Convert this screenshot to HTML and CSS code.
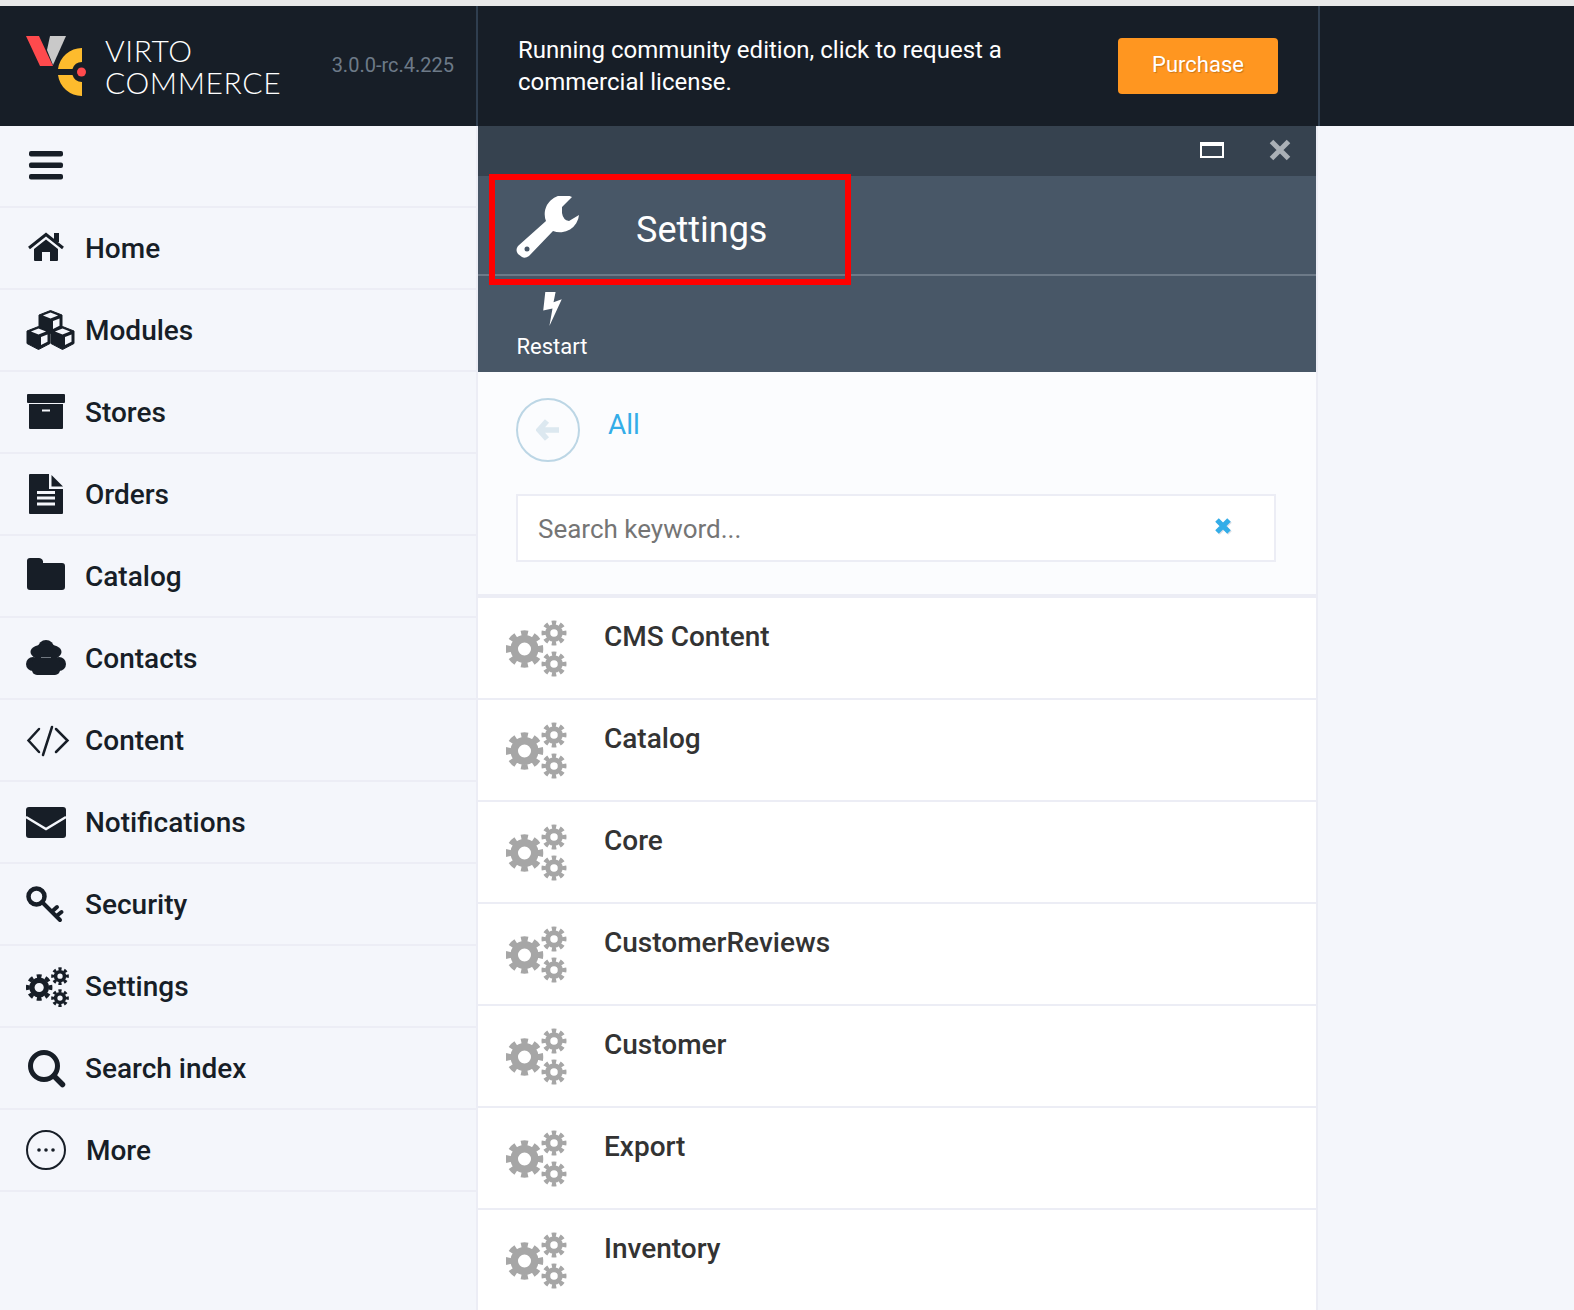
FILE: index.html
```html
<!DOCTYPE html>
<html lang="en">
<head>
    <meta charset="UTF-8">
    <meta name="viewport" content="width=device-width, initial-scale=1.0">
    <title>Virto Commerce - Settings</title>
    <link rel="stylesheet" href="styles.css">
</head>
<body>
    <!-- shared icons -->
    <svg class="defs" width="0" height="0">
        <symbol id="cogs" viewBox="0 0 62 58">
            <circle class="ring" cx="18.5" cy="29" r="10.25" stroke-width="7.5"/>
            <circle class="ring" cx="18.5" cy="29" r="16" stroke-width="5.5" pathLength="16" stroke-dasharray="1.1 0.9" stroke-dashoffset="0.55"/>
            <circle class="ring" cx="48" cy="13" r="6.25" stroke-width="5"/>
            <circle class="ring" cx="48" cy="13" r="10.25" stroke-width="4.5" pathLength="16" stroke-dasharray="1.1 0.9" stroke-dashoffset="0.55"/>
            <circle class="ring" cx="48" cy="44" r="6.25" stroke-width="5"/>
            <circle class="ring" cx="48" cy="44" r="10.25" stroke-width="4.5" pathLength="16" stroke-dasharray="1.1 0.9" stroke-dashoffset="0.55"/>
        </symbol>
        <symbol id="cube" viewBox="0 0 24 24" overflow="visible">
            <path d="M12 .5L23.5 5V17.5L12 23.5L.5 17.5V5Z" fill="#171e27" stroke="#171e27" stroke-linejoin="round"/>
            <path d="M12 2.6L19.6 5.6L12 8.6L4.4 5.6Z" fill="#f4f6fb"/>
            <path d="M14.5 11L21 8.4V15.8L14.5 19Z" fill="#f4f6fb"/>
        </symbol>
    </svg>

    <header class="topbar">
        <div class="brand">
            <svg class="logo" viewBox="0 0 60 60">
                <path d="M0 0H13L27 30H14Z" fill="#ff4a4d"/>
                <path d="M24 0H40L27 29L21 14Z" fill="#c9c9c9"/>
                <path d="M56 12A24 24 0 0 0 32 33H46.500A10 10 0 0 1 56 26Z" fill="#fdbb2d"/>
                <path d="M32 39H46.500A10 10 0 0 0 56 46V60A24 24 0 0 1 32 39Z" fill="#fdbb2d"/>
                <circle cx="55.500" cy="36" r="4.500" fill="#ff4a4d"/>
            </svg>
            <div class="brand-name">VIRTO<br>COMMERCE</div>
            <div class="version">3.0.0-rc.4.225</div>
        </div>
        <div class="notice">
            <p>Running community edition, click to request a commercial license.</p>
            <button class="purchase" type="button">Purchase</button>
        </div>
    </header>

    <div class="main">
        <nav class="sidebar">
            <div class="nav-row">
                <svg class="nav-icon" viewBox="0 0 44 44">
                    <rect x="3" y="7" width="34" height="5.500" rx="2"/>
                    <rect x="3" y="18.500" width="34" height="5.500" rx="2"/>
                    <rect x="3" y="30" width="34" height="5.500" rx="2"/>
                </svg>
            </div>
            <a class="nav-row">
                <svg class="nav-icon" viewBox="0 0 44 44">
                    <path d="M3 22L20 8.500L37 22" fill="none" stroke="#171e27" stroke-width="3"/>
                    <rect x="28" y="7" width="5" height="9"/>
                    <path d="M8 23L20 13.500L32 23V34a1 1 0 0 1-1 1H24V26H16V35H9a1 1 0 0 1-1-1Z"/>
                </svg>
                Home
            </a>
            <a class="nav-row">
                <svg class="nav-icon" viewBox="0 0 44 44">
                    <use href="#cube" x="12.500" y="2" width="24" height="24"/>
                    <use href="#cube" x="0.500" y="18" width="24" height="24"/>
                    <use href="#cube" x="24.500" y="18" width="24" height="24"/>
                </svg>
                Modules
            </a>
            <a class="nav-row">
                <svg class="nav-icon" viewBox="0 0 44 44">
                    <rect x="1" y="4" width="38" height="9" rx="1"/>
                    <path d="M3 14H37V38a1 1 0 0 1-1 1H4a1 1 0 0 1-1-1ZM16 19.500V21.500H24V19.500Z" fill-rule="evenodd"/>
                </svg>
                Stores
            </a>
            <a class="nav-row">
                <svg class="nav-icon" viewBox="0 0 44 44">
                    <path d="M3 3a1 1 0 0 1 1-1H23V17H37V41a1 1 0 0 1-1 1H4a1 1 0 0 1-1-1Z"/>
                    <path d="M25.500 3L37 14.500H25.500Z"/>
                    <path d="M11 19H29V22H11ZM11 24.500H29V27.500H11ZM11 30.500H29V33.500H11Z" fill="#f4f6fb"/>
                </svg>
                Orders
            </a>
            <a class="nav-row">
                <svg class="nav-icon" viewBox="0 0 44 44">
                    <path d="M4 4H13a4 4 0 0 1 4 5H36a3 3 0 0 1 3 3V33a3 3 0 0 1-3 3H4a3 3 0 0 1-3-3V7a3 3 0 0 1 3-3Z"/>
                </svg>
                Catalog
            </a>
            <a class="nav-row">
                <svg class="nav-icon" viewBox="0 0 44 44">
                    <circle cx="20" cy="12" r="8"/>
                    <ellipse cx="20" cy="16" rx="15.500" ry="8"/>
                    <circle cx="7" cy="28" r="7"/>
                    <circle cx="33" cy="28" r="7"/>
                    <rect x="6" y="21" width="28" height="18" rx="5"/>
                    <rect x="15" y="21" width="10" height="0.800" fill="#8a9099"/>
                </svg>
                Contacts
            </a>
            <a class="nav-row">
                <svg class="nav-icon" viewBox="0 0 44 44">
                    <path d="M13 11L2.500 22.500L13 34M26 9L17 37M30 11L41.500 22.500L30 34" fill="none" stroke="#171e27" stroke-width="2.500" stroke-linecap="round"/>
                </svg>
                Content
            </a>
            <a class="nav-row">
                <svg class="nav-icon" viewBox="0 0 44 44">
                    <rect y="7" width="40" height="31" rx="3"/>
                    <path d="M0 17L20 29L40 17" fill="none" stroke="#f4f6fb" stroke-width="2.500"/>
                </svg>
                Notifications
            </a>
            <a class="nav-row">
                <svg class="nav-icon" viewBox="0 0 44 44">
                    <g fill="none" stroke="#171e27">
                        <circle cx="10.500" cy="14.500" r="8" stroke-width="4.500"/>
                        <path d="M16 20L34 38M26 29.500L31 25M30.500 34L35.500 30" stroke-width="4" stroke-linecap="round"/>
                    </g>
                </svg>
                Security
            </a>
            <a class="nav-row">
                <svg class="nav-icon" viewBox="0 0 44 44">
                    <use href="#cogs" x="0" y="3" width="44" height="41"/>
                </svg>
                Settings
            </a>
            <a class="nav-row">
                <svg class="nav-icon" viewBox="0 0 44 44">
                    <g fill="none" stroke="#171e27">
                        <circle cx="18" cy="20" r="13.500" stroke-width="5"/>
                        <path d="M28 30L36.500 38.500" stroke-width="5.500" stroke-linecap="round"/>
                    </g>
                </svg>
                Search index
            </a>
            <a class="nav-row nav-more">
                <svg class="nav-icon" viewBox="0 0 44 44">
                    <circle cx="20" cy="22" r="19" fill="none" stroke="#171e27" stroke-width="2"/>
                    <circle cx="13" cy="22" r="1.800"/>
                    <circle cx="20" cy="22" r="1.800"/>
                    <circle cx="27" cy="22" r="1.800"/>
                </svg>
                More
            </a>
        </nav>

        <section class="blade">
            <div class="blade-bar">
                <span class="maximize"></span>
                <svg class="close" width="22" height="22" viewBox="0 0 22 22">
                    <path d="M2.500 2.500L19.500 19.500M19.500 2.500L2.500 19.500" stroke="#aab0b6" stroke-width="5"/>
                </svg>
            </div>

            <div class="blade-head">
                <svg class="wrench" width="64" height="64" viewBox="0 0 64 64">
                    <path d="M56 1A19 19 0 0 0 30 25L2 50Q-1 54 2 58L6 61Q9 63 13 60L37 35A19 19 0 0 0 63 19L53 25Q47 24 46 17V11Z" fill="#fff"/>
                    <circle cx="11" cy="53" r="2.500" fill="#485767"/>
                </svg>
                <h1>Settings</h1>
                <div class="highlight"></div>
            </div>

            <div class="blade-tools">
                <div class="tool">
                    <svg width="19" height="34" viewBox="0 0 18 33">
                        <path d="M2 0H12L10 10L18 7L6 33L9 16L0 18Z" fill="#fff"/>
                    </svg>
                    <span>Restart</span>
                </div>
            </div>

            <div class="blade-filter">
                <div class="crumbs">
                    <div class="back">
                        <svg width="24" height="24" viewBox="0 0 24 24" fill="none">
                            <path d="M11 3L3 12L11 21M4 12H23" stroke="#dce8f0" stroke-width="5.500"/>
                        </svg>
                    </div>
                    <a class="crumb">All</a>
                </div>
                <div class="search">
                    <input type="text" placeholder="Search keyword...">
                    <svg class="clear" width="18" height="18" viewBox="0 0 18 18">
                        <path d="M3 3L15 15M15 3L3 15" stroke="#33ade8" stroke-width="5"/>
                    </svg>
                </div>
            </div>

            <ul class="groups">
                <li><svg width="62" height="58"><use href="#cogs"/></svg>CMS Content</li>
                <li><svg width="62" height="58"><use href="#cogs"/></svg>Catalog</li>
                <li><svg width="62" height="58"><use href="#cogs"/></svg>Core</li>
                <li><svg width="62" height="58"><use href="#cogs"/></svg>CustomerReviews</li>
                <li><svg width="62" height="58"><use href="#cogs"/></svg>Customer</li>
                <li><svg width="62" height="58"><use href="#cogs"/></svg>Export</li>
                <li><svg width="62" height="58"><use href="#cogs"/></svg>Inventory</li>
            </ul>
        </section>
    </div>
</body>
</html>
```

FILE: styles.css
```css
html, body {
    height: 100%;
}

body {
    margin: 0;
    overflow: hidden;
    background-color: #f4f6fb;
    border-top: 6px solid #e8e8e8;
    box-sizing: border-box;
    font-family: Roboto, "Liberation Sans", sans-serif;
    color: #171e27;
}

.defs {
    position: absolute;
}

.ring {
    fill: none;
    stroke: currentColor;
}

/* header */
.topbar {
    display: flex;
    height: 120px;
    background-color: #171e27;
}

.brand {
    display: flex;
    align-items: center;
    box-sizing: border-box;
    width: 478px;
    padding: 0 22px 0 26px;
    border-right: 2px solid #2f3e4f;
}

.logo {
    width: 60px;
    height: 60px;
    margin-right: 19px;
}

.brand-name {
    margin-top: -1px;
    font-family: Lato, sans-serif;
    font-weight: 300;
    font-size: 30px;
    letter-spacing: 0.6px;
    line-height: 32px;
    color: #fff;
}

.version {
    margin-left: auto;
    margin-top: -2px;
    font-size: 20px;
    color: #6d7a88;
}

.notice {
    display: flex;
    align-items: center;
    justify-content: space-between;
    box-sizing: border-box;
    width: 842px;
    padding: 0 40px;
    border-right: 2px solid #2f3e4f;
    color: #fff;
    font-size: 24px;
    line-height: 32px;
}

.notice p {
    width: 500px;
    margin: 0;
}

.purchase {
    width: 160px;
    height: 56px;
    padding-bottom: 4px;
    background-color: #ff9620;
    color: #fff;
    border: none;
    border-radius: 4px;
    font-family: inherit;
    font-size: 22px;
    font-weight: 400;
    text-shadow: 1px 1px 1px #c9761a;
}

/* layout */
.main {
    display: flex;
}

.sidebar {
    box-sizing: border-box;
    width: 478px;
    border-right: 2px solid #ecedf5;
}

.nav-row {
    display: flex;
    align-items: center;
    gap: 15px;
    box-sizing: border-box;
    height: 82px;
    padding-left: 26px;
    border-bottom: 2px solid #ecedf5;
    font-size: 28px;
    font-weight: 500;
    color: #171e27;
}

.nav-more {
    gap: 16px;
}

.nav-icon {
    flex: none;
    width: 44px;
    height: 44px;
    overflow: visible;
    fill: #171e27;
}

/* blade */
.blade {
    box-sizing: border-box;
    width: 840px;
    border-right: 2px solid #ecedf5;
    background-color: #fff;
}

.blade-bar {
    display: flex;
    align-items: center;
    justify-content: flex-end;
    gap: 45px;
    box-sizing: border-box;
    height: 50px;
    padding: 0 25px 2px 0;
    background-color: #36424f;
}

.maximize {
    box-sizing: border-box;
    width: 24px;
    height: 16px;
    border: 2px solid #fff;
    border-top-width: 4px;
}

.blade-head {
    position: relative;
    display: flex;
    align-items: center;
    gap: 56px;
    box-sizing: border-box;
    height: 100px;
    padding-left: 38px;
    padding-top: 6px;
    background-color: #485767;
    border-bottom: 2px solid #6d7a88;
}

.blade-head h1 {
    margin: 4px 0 0;
    font-size: 36px;
    font-weight: 400;
    color: #fff;
}

/* annotation drawn over the screenshot */
.highlight {
    position: absolute;
    left: 11px;
    top: -2px;
    box-sizing: border-box;
    width: 362px;
    height: 111px;
    border: 6px solid #ff0000;
}

.blade-tools {
    height: 96px;
    padding-left: 38px;
    background-color: #485767;
}

.tool {
    display: flex;
    flex-direction: column;
    align-items: center;
    width: 72px;
    padding-top: 16px;
    color: #fff;
    font-size: 22px;
    line-height: 28px;
}

.tool span {
    margin-top: 7px;
}

.blade-filter {
    box-sizing: border-box;
    height: 226px;
    padding: 26px 40px 0 38px;
    background-color: #fbfcfe;
    border-bottom: 4px solid #ecedf5;
}

.crumbs {
    display: flex;
    gap: 28px;
    height: 96px;
}

.back {
    display: flex;
    align-items: center;
    justify-content: center;
    box-sizing: border-box;
    width: 64px;
    height: 64px;
    border: 2px solid #bcd6e5;
    border-radius: 50%;
}

.crumb {
    font-size: 28px;
    font-weight: 400;
    line-height: 54px;
    color: #33ade8;
}

.search {
    display: flex;
    align-items: center;
    box-sizing: border-box;
    height: 68px;
    padding: 0 42px 0 20px;
    background-color: #fff;
    border: 2px solid #ecedf5;
}

.search input {
    flex: 1;
    border: none;
    outline: none;
    padding: 2px 0 0;
    font-family: inherit;
    font-size: 26px;
    color: #333;
}

.search input::placeholder {
    color: #757575;
    opacity: 1;
}

.clear {
    margin-top: -4px;
    filter: drop-shadow(1px 1px 0 #dde0e6);
}

.groups {
    margin: 0;
    padding: 0;
    list-style: none;
}

.groups li {
    display: flex;
    align-items: flex-start;
    gap: 36px;
    box-sizing: border-box;
    height: 102px;
    padding: 22px 0 0 28px;
    border-bottom: 2px solid #ecedf5;
    font-size: 28px;
    font-weight: 500;
    line-height: 34px;
    color: #333;
}

.groups svg {
    flex: none;
    color: #a6a6a6;
}
```
